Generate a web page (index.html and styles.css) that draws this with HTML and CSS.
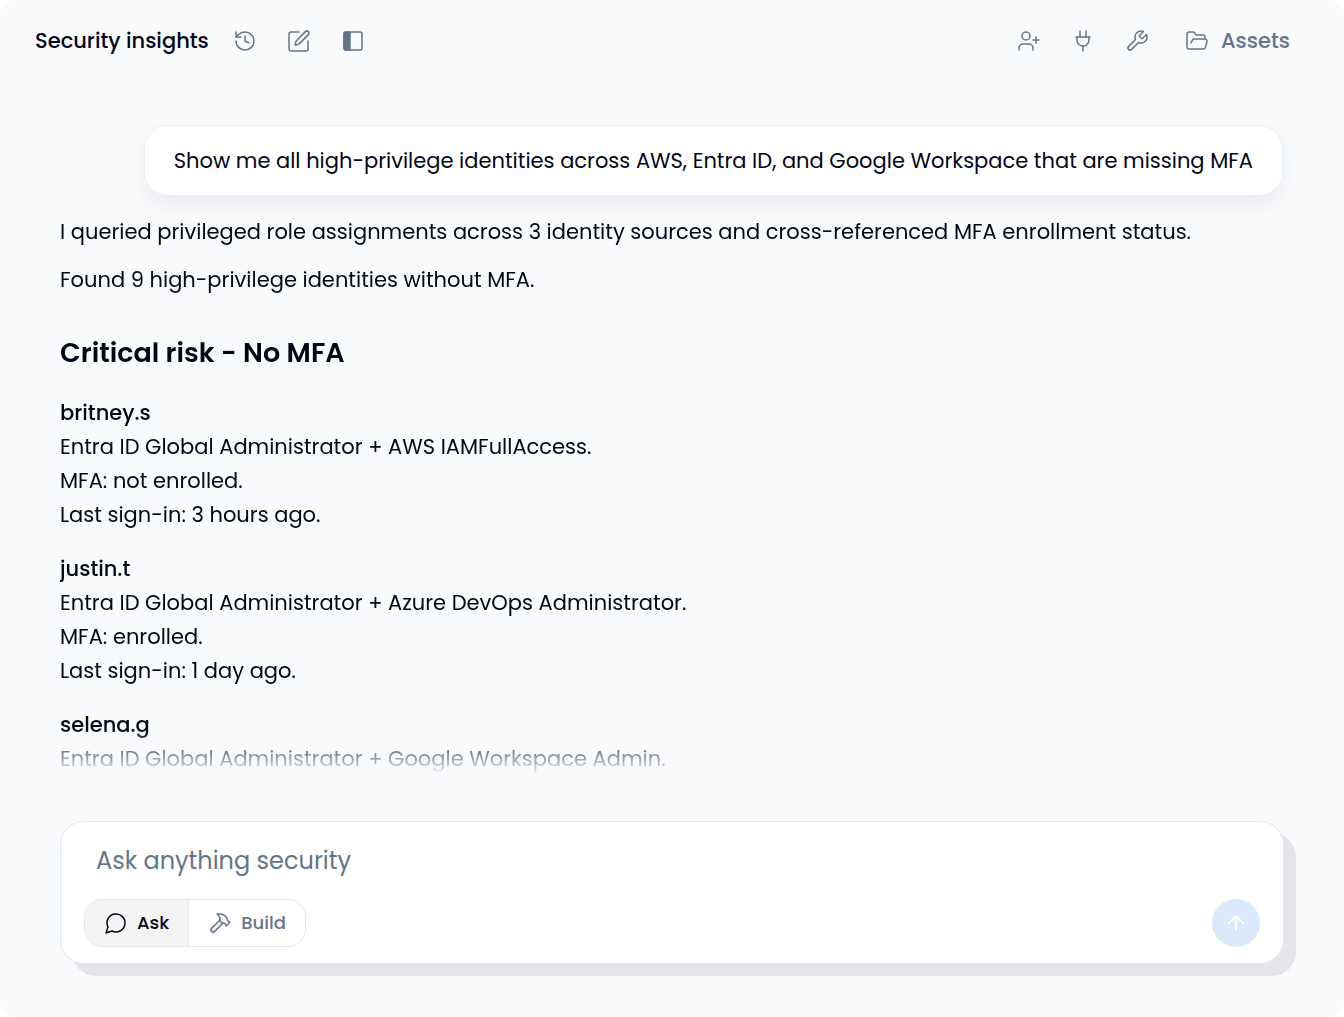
FILE: index.html
```
<!DOCTYPE html>
<html lang="en">
<head>
<meta charset="utf-8">
<meta name="viewport" content="width=device-width, initial-scale=1">
<title>Security insights</title>
<link rel="stylesheet" href="styles.css">
</head>
<body>
<div class="app">
  <header class="topbar">
    <h1 class="topbar-title">Security insights</h1>
    <div class="topbar-actions">
      <button class="icon-button" type="button" aria-label="History">
        <svg class="icon" viewBox="0 0 24 24"><path d="M3 12a9 9 0 1 0 9-9 9.75 9.75 0 0 0-6.74 2.74L3 8"/><path d="M3 3v5h5"/><path d="M12 7v5l4 2"/></svg>
      </button>
      <button class="icon-button" type="button" aria-label="New chat">
        <svg class="icon" viewBox="0 0 24 24"><path d="M12 3H4a2 2 0 0 0-2 2v15a2 2 0 0 0 2 2h15a2 2 0 0 0 2-2v-8"/><path d="M18.4 2.6a2.1 2.1 0 0 1 3 3l-9 9a2 2 0 0 1-.9.5l-2.8.9a.5.5 0 0 1-.6-.6l.8-2.9a2 2 0 0 1 .5-.8z"/></svg>
      </button>
      <button class="icon-button" type="button" aria-label="Toggle sidebar">
        <svg class="icon" viewBox="0 0 24 24"><rect x="3" y="3" width="18" height="18" rx="2"/><path class="icon-fill" d="M5 3h4v18H5a2 2 0 0 1-2-2V5a2 2 0 0 1 2-2z"/></svg>
      </button>
    </div>
    <div class="topbar-actions topbar-end">
      <button class="icon-button" type="button" aria-label="Invite people">
        <svg class="icon" viewBox="0 0 24 24"><path d="M16 21v-2a4 4 0 0 0-4-4H6a4 4 0 0 0-4 4v2"/><circle cx="9" cy="7" r="4"/><path d="M19 8v6"/><path d="M22 11h-6"/></svg>
      </button>
      <button class="icon-button" type="button" aria-label="Connections">
        <svg class="icon" viewBox="0 0 24 24"><path d="M12 22v-5"/><path d="M9 8V2"/><path d="M15 8V2"/><path d="M5 8h14"/><path d="M18 8v3a6 6 0 0 1-12 0V8"/></svg>
      </button>
      <button class="icon-button" type="button" aria-label="Tools">
        <svg class="icon" viewBox="0 0 24 24"><path d="M14.700 6.300a1 1 0 0 0 0 1.400l1.600 1.600a1 1 0 0 0 1.400 0l3.770-3.770a6 6 0 0 1-7.940 7.940l-6.910 6.910a2.120 2.120 0 0 1-3-3l6.910-6.910a6 6 0 0 1 7.940-7.940l-3.760 3.760z"/></svg>
      </button>
      <button class="assets-button" type="button">
        <svg class="icon" viewBox="0 0 24 24"><path d="m6 14 1.500-2.900A2 2 0 0 1 9.240 10H20a2 2 0 0 1 1.940 2.500l-1.540 6a2 2 0 0 1-1.950 1.500H4a2 2 0 0 1-2-2V5a2 2 0 0 1 2-2h3.900a2 2 0 0 1 1.690.9l.81 1.200a2 2 0 0 0 1.670.9H18a2 2 0 0 1 2 2v2"/></svg>
        <span>Assets</span>
      </button>
    </div>
  </header>

  <main class="conversation">
    <p class="prompt">Show me all high-privilege identities across AWS, Entra ID, and Google Workspace that are missing MFA</p>
    <section class="answer">
      <p>I queried privileged role assignments across 3 identity sources and cross-referenced MFA enrollment status.</p>
      <p>Found 9 high-privilege identities without MFA.</p>
      <h2 class="answer-heading">Critical risk - No MFA</h2>
      <div class="identities">
        <article>
          <h3>britney.s</h3>
          <p>Entra ID Global Administrator + AWS IAMFullAccess.</p>
          <p>MFA: not enrolled.</p>
          <p>Last sign-in: 3 hours ago.</p>
        </article>
        <article>
          <h3>justin.t</h3>
          <p>Entra ID Global Administrator + Azure DevOps Administrator.</p>
          <p>MFA: enrolled.</p>
          <p>Last sign-in: 1 day ago.</p>
        </article>
        <article>
          <h3>selena.g</h3>
          <p>Entra ID Global Administrator + Google Workspace Admin.</p>
        </article>
      </div>
    </section>
  </main>

  <form class="composer">
    <input class="composer-input" type="text" aria-label="Ask anything security" placeholder="Ask anything security">
    <div class="composer-row">
      <div class="modes">
        <button class="mode mode-active" type="button" aria-pressed="true">
          <svg class="icon" viewBox="0 0 24 24"><path d="M7.900 20A9 9 0 1 0 4 16.100L2 22Z"/></svg>
          <span>Ask</span>
        </button>
        <button class="mode" type="button" aria-pressed="false">
          <svg class="icon" viewBox="0 0 24 24"><path d="m15 12-8.373 8.373a1 1 0 1 1-3-3L12 9"/><path d="m18 15 4-4"/><path d="m21.500 11.500-1.914-1.914A2 2 0 0 1 19 8.172V7l-2.260-2.260a6 6 0 0 0-4.202-1.756L9 2.960l.920.820A6.180 6.180 0 0 1 12 8.400V10l2 2h1.172a2 2 0 0 1 1.414.586L18.500 14.500"/></svg>
          <span>Build</span>
        </button>
      </div>
      <button class="send" type="submit" aria-label="Send">
        <svg class="icon send-icon" viewBox="0 0 24 24"><path d="m5 12 7-7 7 7"/><path d="M12 19V5"/></svg>
      </button>
    </div>
  </form>
</div>
</body>
</html>
```
FILE: styles.css
```
:root {
  --ink: #020617;
  --muted: #64748b;
  --line: #e2e8f0;
  --surface: #f8fafc;
}

* {
  box-sizing: border-box;
}

body,
h1,
h2,
h3,
p {
  margin: 0;
}

body {
  background: #fff;
  color: var(--ink);
  font-family: Poppins, Inter, sans-serif;
  font-size: 21px;
  line-height: 34px;
}

button,
input {
  padding: 0;
  border: 0;
  background: none;
  color: var(--muted);
  font: inherit;
}

.app {
  display: flex;
  flex-direction: column;
  min-height: 100vh;
  padding-bottom: 53px;
  border-radius: 16px;
  background: var(--surface);
}

.icon {
  display: block;
  flex: none;
  width: 24px;
  height: 24px;
  fill: none;
  stroke: currentColor;
  stroke-width: 1.5;
  stroke-linecap: round;
  stroke-linejoin: round;
}

.icon-fill {
  fill: currentColor;
}

.topbar {
  display: flex;
  align-items: center;
  gap: 24px;
  padding: 24px 54px 24px 35px;
}

.topbar-title {
  font-size: 21px;
  font-weight: 500;
}

.topbar-actions {
  display: flex;
  align-items: center;
  gap: 30px;
}

.topbar-end {
  margin-left: auto;
}

.assets-button {
  display: flex;
  align-items: center;
  gap: 12px;
  margin-left: 6px;
  font-weight: 500;
}

.conversation {
  display: flex;
  flex: 1;
  flex-direction: column;
  gap: 19px;
  padding: 43px 61px 0 60px;
}

.prompt {
  align-self: flex-end;
  padding: 18px 29px 17px;
  border: 1px solid #eaf0fa;
  border-radius: 24px;
  background: #fff;
  box-shadow: 0 10px 20px rgb(15 23 42 / 5%);
}

.answer {
  display: flex;
  flex-direction: column;
  gap: 14px;
  -webkit-mask-image: linear-gradient(to top, transparent 0, #000 48px);
  mask-image: linear-gradient(to top, transparent 0, #000 48px);
}

.answer-heading {
  padding: 23px 0 10px;
  font-size: 27px;
  font-weight: 600;
  line-height: 38px;
}

.identities {
  display: flex;
  flex-direction: column;
  gap: 20px;
}

.identities h3 {
  font-size: 21px;
  font-weight: 500;
}

.composer {
  display: flex;
  flex-direction: column;
  gap: 20px;
  margin: 45px 60px 0;
  padding: 20px 23px 16px;
  border: 1px solid var(--line);
  border-radius: 24px;
  background: #fff;
  box-shadow: 12px 12px 0 #e4e5e9;
}

.composer-input {
  width: 100%;
  height: 37px;
  padding: 0 12px;
  font-size: 24px;
}

.composer-input::placeholder {
  color: var(--muted);
  opacity: 1;
}

.composer-row {
  display: flex;
  align-items: center;
  justify-content: space-between;
}

.modes {
  display: flex;
  height: 48px;
  overflow: hidden;
  border: 1px solid var(--line);
  border-radius: 18px;
}

.mode {
  display: flex;
  align-items: center;
  gap: 9px;
  padding: 0 19px;
  font-size: 18px;
  font-weight: 500;
}

.mode-active {
  border-right: 1px solid var(--line);
  background: #f4f4f5;
  color: var(--ink);
}

.send {
  display: grid;
  place-items: center;
  width: 48px;
  height: 48px;
  border-radius: 50%;
  background: #dbeafb;
  color: #fff;
}

.send-icon {
  stroke-width: 2;
}
```
